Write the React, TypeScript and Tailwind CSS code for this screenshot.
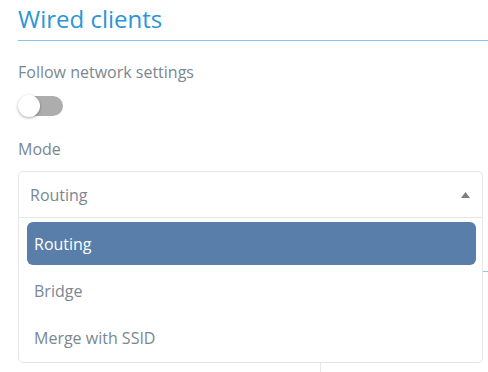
import { useState } from "react";

const options = ["Routing", "Bridge", "Merge with SSID"];

export default function App() {
  const [mode, setMode] = useState("Routing");

  return (
    <div className="h-[372px] w-[488px] overflow-hidden bg-white pl-[18px] font-['Open_Sans',sans-serif]">
      <div className="border-b border-[#84c8ec] pt-[3px] pb-[5px] text-[24px] leading-[32px] text-[#2a96d5]">
        Wired clients
      </div>

      <div className="mt-[20px] text-[16px] leading-[22px] text-[#7a8791]">Follow network settings</div>
      <div className="relative mt-[12px] h-[22px] w-[45px]">
        <div className="absolute top-[1px] left-[4px] h-[20px] w-[41px] rounded-full bg-[#adadad]" />
        <div className="absolute top-0 left-0 h-[22px] w-[22px] rounded-full bg-white shadow-[0_1px_3px_rgba(0,0,0,0.35)]" />
      </div>

      <div className="mt-[21px] text-[16px] leading-[22px] text-[#7a8791]">Mode</div>

      <div className="relative mt-[11px] mr-[5px]">
        <div className="flex h-[46px] items-center justify-between rounded-t-[5px] border border-b-0 border-[#e6e6e6] pr-[12px] pl-[11px] text-[16px] text-[#7a8791]">
          <span>{mode}</span>
          <svg width="9" height="6" viewBox="0 0 9 6">
            <path d="M4.5 0 L9 6 L0 6 Z" fill="#7f7f7f" />
          </svg>
        </div>

        <div className="absolute top-[46px] right-0 left-0 z-10 rounded-b-[5px] border border-[#e6e6e6] bg-white pt-[4px] pr-[6px] pb-[3px] pl-[8px]">
          <div className="flex flex-col gap-[4px]">
            {options.map((o) => (
              <div
                key={o}
                onClick={() => setMode(o)}
                className={`flex h-[43px] items-center rounded-[6px] px-[7px] text-[16px] ${
                  o === mode ? "bg-[#587ea9] text-white" : "text-[#7a8791]"
                }`}
              >
                {o}
              </div>
            ))}
          </div>
        </div>
      </div>

      {/* next section, mostly hidden behind the open dropdown */}
      <div className="mt-[20px] h-[35px] border-b border-[#84c8ec]" />

      <div className="mt-[40px] flex h-[80px]">
        <div className="w-[303px] border-r border-[#e6e6e6]" />
        <div className="flex-1" />
      </div>
    </div>
  );
}
